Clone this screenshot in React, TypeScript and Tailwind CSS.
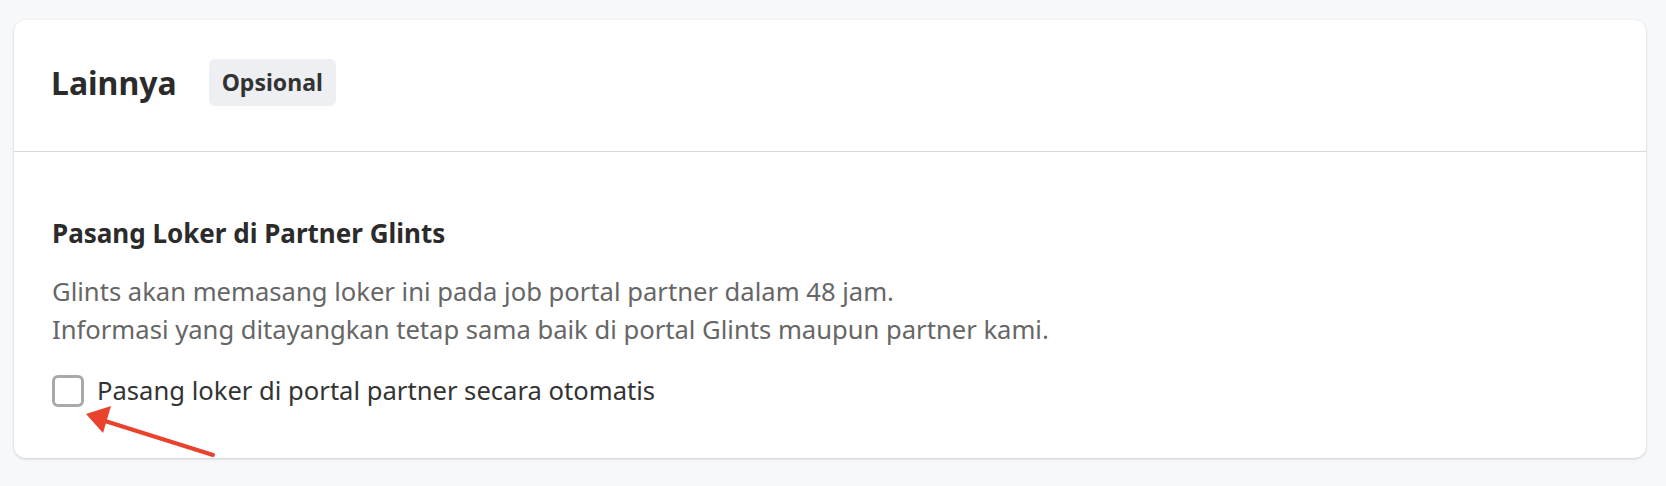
import React from "react";

export default function App() {
  return (
    <div
      className="w-[1666px] h-[486px] bg-[#f7f8fa] pt-[20px] pl-[14px] relative"
      style={{ fontFamily: '"Noto Sans", "Open Sans", sans-serif' }}
    >
      <div className="w-[1632px] h-[438px] bg-white rounded-[12px] shadow-[0_1px_3px_rgba(0,0,0,0.18)] flex flex-col">
        <div className="flex items-center gap-[32px] px-[37px] pt-[39px] pb-[45px] border-b border-[#d9d9d9]">
          <h2 className="text-[32px] leading-[40px] font-bold text-[#2b2b2b]">Lainnya</h2>
          <span className="h-[47px] flex items-center px-[13px] rounded-[6px] bg-[#eeeff3] text-[23px] font-bold text-[#333333]">
            Opsional
          </span>
        </div>
        <div className="flex flex-col px-[38px] pt-[65px]">
          <h3 className="text-[26px] leading-[32px] font-bold text-[#2b2b2b]">
            Pasang Loker di Partner Glints
          </h3>
          <p className="mt-[24px] text-[25.6px] leading-[38px] text-[#666666]">
            Glints akan memasang loker ini pada job portal partner dalam 48 jam.
            <br />
            Informasi yang ditayangkan tetap sama baik di portal Glints maupun partner kami.
          </p>
          <label className="mt-[26px] flex items-center gap-[13px]">
            <span className="w-[32px] h-[32px] rounded-[6px] border-[3px] border-[#a9a9a9] bg-white" />
            <span className="text-[25.6px] leading-[32px] text-[#333333]">
              Pasang loker di portal partner secara otomatis
            </span>
          </label>
        </div>
      </div>
      <svg
        className="absolute left-0 top-0 pointer-events-none"
        width="1666"
        height="486"
        viewBox="0 0 1666 486"
      >
        <line x1="213" y1="455" x2="105" y2="421" stroke="#e8432c" strokeWidth="4" strokeLinecap="round" />
        <polygon points="86,414 111,406 103,433" fill="#e8432c" />
      </svg>
    </div>
  );
}
